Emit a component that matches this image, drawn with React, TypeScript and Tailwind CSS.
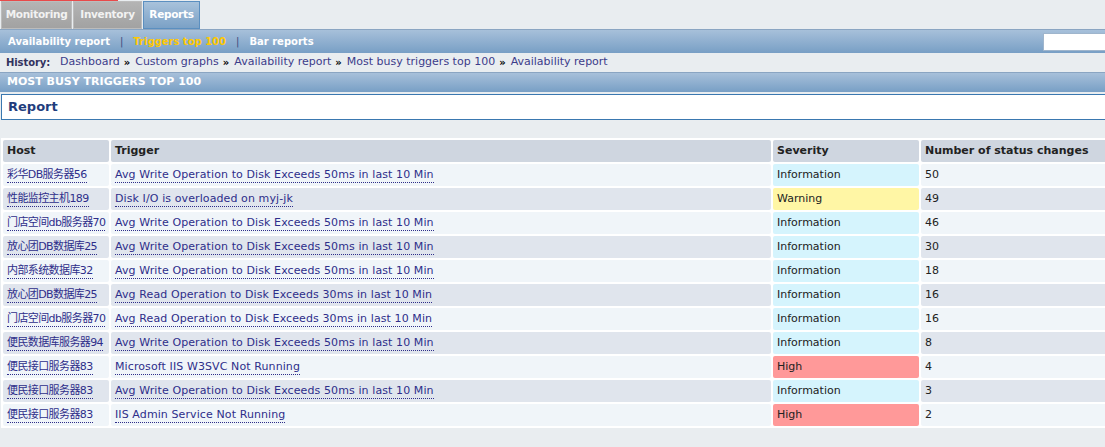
const rows = [
  { host: "彩华DB服务器56", trigger: "Avg Write Operation to Disk Exceeds 50ms in last 10 Min", severity: "Information", count: 50 },
  { host: "性能监控主机189", trigger: "Disk I/O is overloaded on myj-jk", severity: "Warning", count: 49 },
  { host: "门店空间db服务器70", trigger: "Avg Write Operation to Disk Exceeds 50ms in last 10 Min", severity: "Information", count: 46 },
  { host: "放心团DB数据库25", trigger: "Avg Write Operation to Disk Exceeds 50ms in last 10 Min", severity: "Information", count: 30 },
  { host: "内部系统数据库32", trigger: "Avg Write Operation to Disk Exceeds 50ms in last 10 Min", severity: "Information", count: 18 },
  { host: "放心团DB数据库25", trigger: "Avg Read Operation to Disk Exceeds 30ms in last 10 Min", severity: "Information", count: 16 },
  { host: "门店空间db服务器70", trigger: "Avg Read Operation to Disk Exceeds 30ms in last 10 Min", severity: "Information", count: 16 },
  { host: "便民数据库服务器94", trigger: "Avg Write Operation to Disk Exceeds 50ms in last 10 Min", severity: "Information", count: 8 },
  { host: "便民接口服务器83", trigger: "Microsoft IIS W3SVC Not Running", severity: "High", count: 4 },
  { host: "便民接口服务器83", trigger: "Avg Write Operation to Disk Exceeds 50ms in last 10 Min", severity: "Information", count: 3 },
  { host: "便民接口服务器83", trigger: "IIS Admin Service Not Running", severity: "High", count: 2 },
];

const severityBg: Record<string, string> = {
  Information: "bg-[#d5f4fd]",
  Warning: "bg-[#fff6a5]",
  High: "bg-[#ff9999]",
};

const history = ["Dashboard", "Custom graphs", "Availability report", "Most busy triggers top 100", "Availability report"];

function Link({ children, className = "" }: { children: React.ReactNode; className?: string }) {
  return (
    <a className={`cursor-pointer border-b border-dotted border-[#2e2e8a] pb-px text-[#2e2e8a] ${className}`}>
      {children}
    </a>
  );
}

export default function App() {
  return (
    <div className="h-[447px] w-[1105px] overflow-hidden bg-[#e9edf0] font-['DejaVu_Sans','Noto_Sans_CJK_SC',sans-serif] text-[11px] text-[#222]">
      <div className="h-px w-[118px] bg-[#e84a4a]" />

      {/* main tabs */}
      <div className="flex h-[28px] items-stretch gap-px pl-px text-[10.5px] tracking-[-0.3px]">
        <div className="flex w-[71px] items-center justify-center border border-[#bcbcbc] bg-gradient-to-b from-[#b4b4b4] to-[#a2a2a2] font-bold text-[#f2f2f2]">
          Monitoring
        </div>
        <div className="flex w-[69px] items-center justify-center border border-[#bcbcbc] bg-gradient-to-b from-[#b4b4b4] to-[#a2a2a2] font-bold text-[#f2f2f2]">
          Inventory
        </div>
        <div className="flex w-[57px] items-center justify-center border border-[#5b8fc0] bg-gradient-to-b from-[#a8c2db] to-[#7ba1c6] font-bold text-white">
          Reports
        </div>
      </div>

      {/* sub menu */}
      <div className="flex h-[24px] items-center border-t border-[#8aa5c2] bg-gradient-to-b from-[#a7c0da] to-[#789fc5] pl-[8px] text-[10px] font-bold">
        <span className="text-white">Availability report</span>
        <span className="px-[10px] font-normal text-[#3b4b7d]">|</span>
        <span className="text-[#ffc800]">Triggers top 100</span>
        <span className="px-[10px] font-normal text-[#3b4b7d]">|</span>
        <span className="text-white">Bar reports</span>
        <input className="ml-auto mr-[-10px] h-[18px] w-[72px] self-center border border-[#9fb5cc] bg-white" />
      </div>

      {/* history */}
      <div className="flex h-[19px] items-center gap-[4px] pl-[6px] text-[#3c3c8a]">
        <span className="mr-[6px] text-[10px] font-bold tracking-[-0.1px] text-[#33335f]">History:</span>
        {history.map((item, i) => (
          <span key={i} className="flex items-center gap-[5px]">
            {i > 0 && <span className="text-[10px] font-bold text-black">»</span>}
            <span>{item}</span>
          </span>
        ))}
      </div>

      {/* page header */}
      <div className="flex h-[20px] items-center border-t border-[#8aa5c2] bg-gradient-to-b from-[#a7c0da] to-[#789fc5] pl-[7px] font-bold text-white">
        MOST BUSY TRIGGERS TOP 100
      </div>

      <div className="ml-px mt-[2px] flex h-[26px] items-center border-y border-l border-[#3a78b0] bg-white pl-[6px] text-[13px] font-bold text-[#1f3d7d]">
        Report
      </div>

      <div className="mt-[18px] pl-px">
        <table className="w-[1120px] table-fixed border-separate border-spacing-[2px] bg-white">
          <colgroup>
            <col className="w-[106px]" />
            <col className="w-[660px]" />
            <col className="w-[146px]" />
            <col />
          </colgroup>
          <thead>
            <tr className="h-[22px] text-left font-bold">
              {["Host", "Trigger", "Severity", "Number of status changes"].map((h) => (
                <th key={h} className="rounded-[2px] bg-[#cfd6e0] px-[4px] py-0 font-bold">
                  {h}
                </th>
              ))}
            </tr>
          </thead>
          <tbody>
            {rows.map((row, i) => {
              const rowBg = i % 2 === 0 ? "bg-[#f0f5f9]" : "bg-[#e0e5ed]";
              return (
                <tr key={i} className="h-[22px]">
                  <td className={`rounded-[2px] px-[4px] py-0 whitespace-nowrap ${rowBg}`}>
                    <Link className="tracking-[-0.6px]">{row.host}</Link>
                  </td>
                  <td className={`rounded-[2px] px-[4px] py-0 whitespace-nowrap ${rowBg}`}>
                    <Link className="tracking-[0.1px]">{row.trigger}</Link>
                  </td>
                  <td className={`rounded-[2px] px-[4px] py-0 ${severityBg[row.severity]}`}>{row.severity}</td>
                  <td className={`rounded-[2px] px-[4px] py-0 ${rowBg}`}>{row.count}</td>
                </tr>
              );
            })}
          </tbody>
        </table>
      </div>
    </div>
  );
}
